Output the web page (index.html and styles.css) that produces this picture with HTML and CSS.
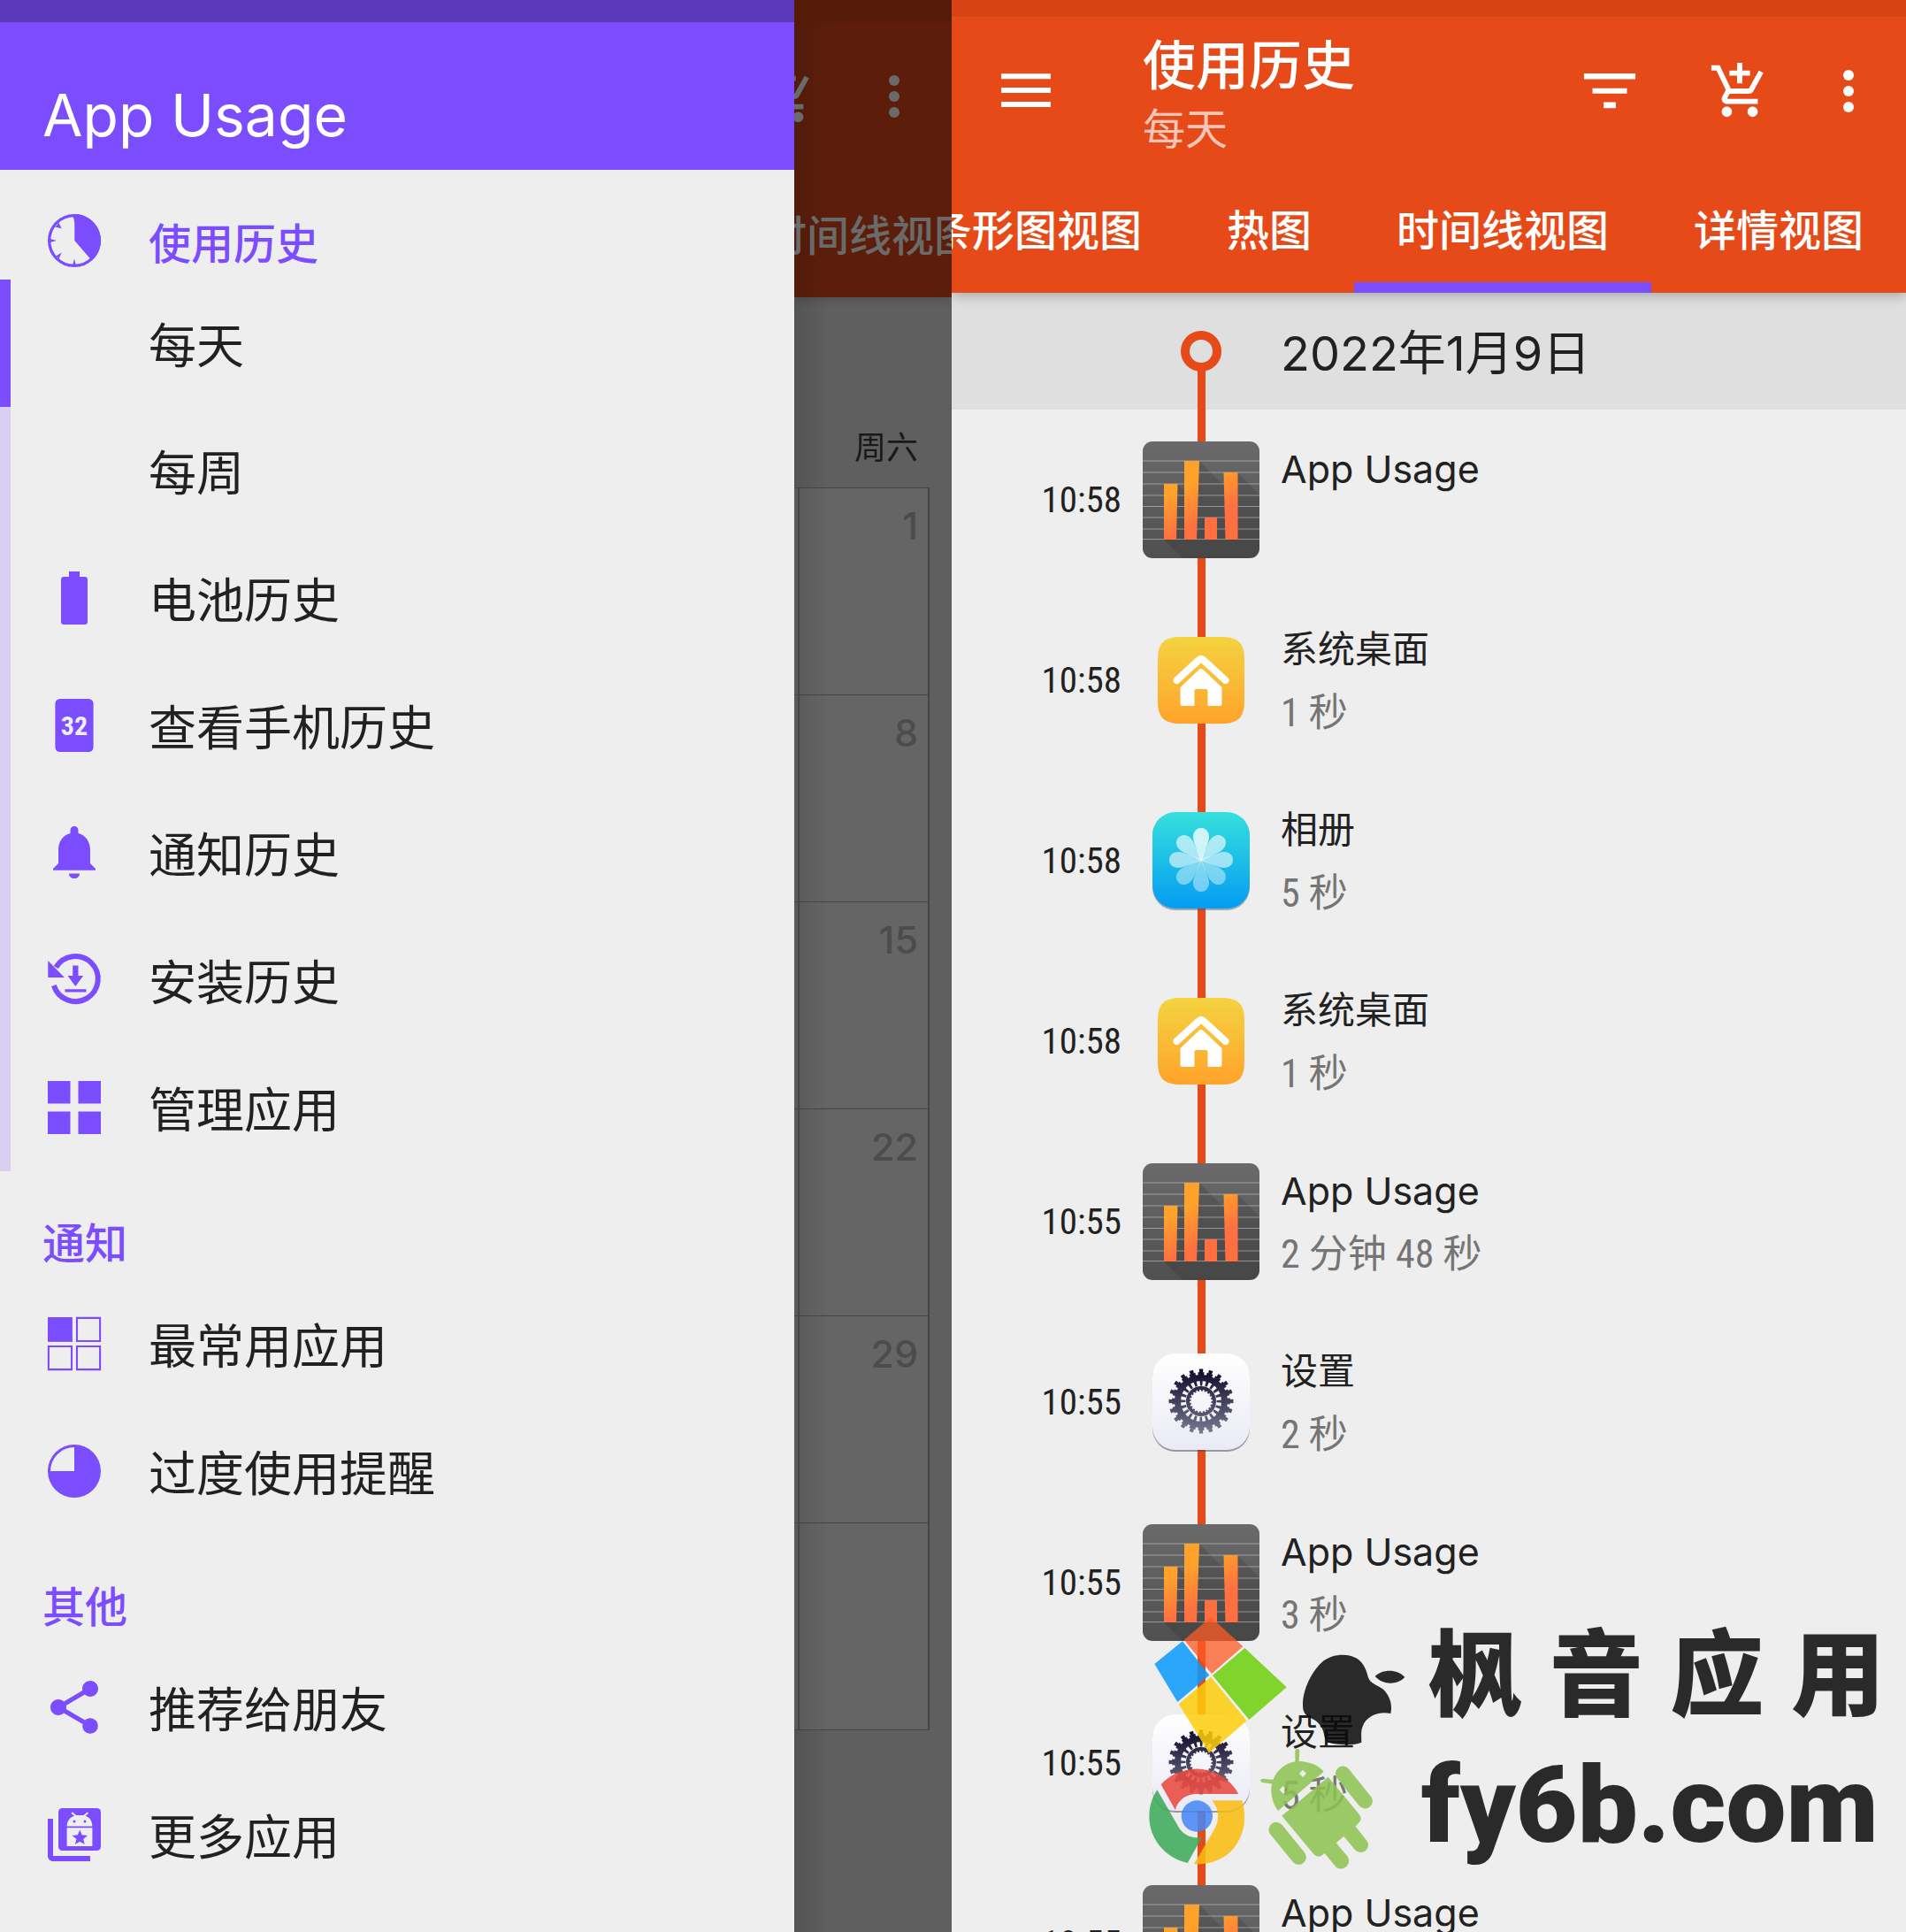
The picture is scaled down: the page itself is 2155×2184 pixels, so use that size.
FILE: index.html
```html
<!DOCTYPE html>
<html lang="zh-CN">
<head>
<meta charset="utf-8">
<meta name="viewport" content="width=device-width, initial-scale=1">
<title>App Usage</title>
<link rel="stylesheet" href="styles.css">
</head>
<body>
<svg class="defs" width="0" height="0" aria-hidden="true">
  <defs>
    <linearGradient id="g-tile" x1="0" y1="0" x2="0" y2="1"><stop offset="0" stop-color="#6a6a6a"/><stop offset="1" stop-color="#505050"/></linearGradient>
    <linearGradient id="g-bar" gradientUnits="userSpaceOnUse" x1="50" y1="50" x2="70" y2="90"><stop offset="0" stop-color="#ffa22b"/><stop offset="1" stop-color="#ff6f40"/></linearGradient>
    <linearGradient id="g-home" x1="0" y1="0" x2="0" y2="1"><stop offset="0" stop-color="#f4d340"/><stop offset="1" stop-color="#ffa32b"/></linearGradient>
    <linearGradient id="g-photo" x1="0" y1="0" x2="0" y2="1"><stop offset="0" stop-color="#36e0dc"/><stop offset="1" stop-color="#049cf2"/></linearGradient>
    <linearGradient id="g-set" x1="0" y1="0" x2="0" y2="1"><stop offset="0" stop-color="#ffffff"/><stop offset="1" stop-color="#eaeaf5"/></linearGradient>
    <linearGradient id="g-gear" gradientUnits="userSpaceOnUse" x1="0" y1="18" x2="0" y2="92"><stop offset="0" stop-color="#0c0828"/><stop offset="1" stop-color="#7b7990"/></linearGradient>
    <symbol id="i-cart" viewBox="0 0 24 24"><path d="M11 9h2V6h3V4h-3V1h-2v3H8v2h3v3zm-4 9c-1.1 0-1.99.9-1.99 2S5.9 22 7 22s2-.9 2-2-.9-2-2-2zm10 0c-1.1 0-1.99.9-1.99 2s.89 2 1.99 2 2-.9 2-2-.9-2-2-2zm-9.83-3.25l.03-.12.9-1.63h7.45c.75 0 1.41-.41 1.75-1.03l3.86-7.01L19.42 4h-.01l-1.1 2-2.76 5H8.53l-.13-.27L6.16 6l-.95-2-.94-2H1v2h2l3.6 7.59-1.35 2.45c-.16.28-.25.61-.25.96 0 1.1.9 2 2 2h12v-2H7.42c-.13 0-.25-.11-.25-.25z"/></symbol>
    <symbol id="i-more" viewBox="0 0 24 24"><circle cx="12" cy="6" r="2"/><circle cx="12" cy="12" r="2"/><circle cx="12" cy="18" r="2"/></symbol>
    <symbol id="i-usage" viewBox="0 0 132 132">
      <rect width="132" height="132" rx="11" fill="url(#g-tile)"/>
      <path d="M64 22 132 90V121Q132 132 121 132H45L24 111 39 48 48 57V22ZM107 35 132 60V90L107 65Z" fill="#000" opacity=".12"/>
      <path d="M0 22H132M0 35H132M0 48H132M0 61H132M0 73.500H132M0 86H132M0 99H132M0 110.500H132" stroke="#fff" stroke-opacity=".4" stroke-width="1.200"/>
      <path d="M24 48H39.500L38 111H24ZM47 22H64L61 111H47ZM70 86H84V111H70ZM91.500 35H107.500V111H93.500Z" fill="url(#g-bar)"/>
    </symbol>
    <symbol id="i-home" viewBox="0 0 98 98">
      <path d="M0 26C0 7 7 0 26 0H72C91 0 98 7 98 26V72C98 91 91 98 72 98H26C7 98 0 91 0 72Z" fill="url(#g-home)"/>
      <path d="M21.500 49 46 26.500Q49 23.500 52 26.500L76.500 49" fill="none" stroke="#fff" stroke-width="8" stroke-linecap="round"/>
      <path d="M25.500 57 46 37.500Q49 34.500 52 37.500L72.500 57V75.500Q72.500 78 70 78H56.500V61Q56.500 59 54.500 59H43.500Q41.500 59 41.500 61V78H28Q25.500 78 25.500 75.500Z" fill="#fff"/>
    </symbol>
    <symbol id="i-photo" viewBox="0 0 110 112">
      <rect y="3" width="110" height="109" rx="26" fill="#456" opacity=".45"/>
      <rect y="1" width="110" height="109" rx="26" fill="url(#g-photo)"/>
      <g transform="translate(55 55)" fill="#fff">
        <path id="petal" d="M0 2 -8 -20C-11 -29 -7 -36 0 -36S11 -29 8 -20Z" opacity=".78"/>
        <use href="#petal" transform="rotate(45)" opacity=".8"/><use href="#petal" transform="rotate(90)" opacity=".75"/>
        <use href="#petal" transform="rotate(135)" opacity=".55"/><use href="#petal" transform="rotate(180)" opacity=".55"/>
        <use href="#petal" transform="rotate(225)" opacity=".55"/><use href="#petal" transform="rotate(270)" opacity=".75"/>
        <use href="#petal" transform="rotate(315)" opacity=".8"/>
      </g>
    </symbol>
    <symbol id="i-settings" viewBox="0 0 110 112">
      <rect y="3" width="110" height="109" rx="26" fill="#445" opacity=".5"/>
      <rect y="1" width="110" height="109" rx="26" fill="url(#g-set)"/>
      <g fill="none" stroke="url(#g-gear)">
        <circle cx="55" cy="55" r="26.500" stroke-width="7"/>
        <circle cx="55" cy="55" r="31" stroke-width="4" pathLength="40" stroke-dasharray="1.400 .6" stroke-dashoffset=".7"/>
        <circle cx="55" cy="55" r="34.500" stroke-width="4" pathLength="40" stroke-dasharray=".8 1.200" stroke-dashoffset=".4"/>
        <circle cx="55" cy="55" r="21" stroke-width="7" pathLength="40" stroke-dasharray=".9 1.100" stroke-dashoffset=".4"/>
        <circle cx="55" cy="55" r="15" stroke-width="4"/>
        <circle cx="55" cy="55" r="12.500" stroke-width="2" pathLength="40" stroke-dasharray="1 1"/>
      </g>
    </symbol>
  </defs>
</svg>

<main class="board">
  <section class="phone phone-drawer">
    <nav class="drawer" aria-label="App Usage">
      <header class="drawer-head"><h1>App Usage</h1></header>
      <h2 class="group-title">
        <svg class="ico" viewBox="0 0 24 24" aria-hidden="true"><circle cx="12" cy="12" r="9.450" fill="none" stroke="currentColor" stroke-width="1.100"/><path d="M12.100 12V5.500Q12 4 11.400 2.600L12 2A10 10 0 0 1 18.600 19.500ZM2.900 11.300 5.300 12 2.900 12.700ZM11.400 21.200 12 18.800 12.600 21.200ZM4.700 6.800Q6.200 6.100 5.900 4.700L7.200 7.400ZM5 17.900Q6.200 18 6 19.300L7.200 16.500Z"/></svg>
        使用历史
      </h2>
      <ul class="menu rail">
        <li><a class="current" href="#daily">每天</a></li>
        <li><a href="#weekly">每周</a></li>
        <li><a href="#battery"><svg class="ico" viewBox="0 0 24 24" aria-hidden="true"><path d="M16 4H14V2h-4v2H8C7.400 4 7 4.400 7 5v16c0 .6.4 1 1 1h8c.6 0 1-.4 1-1V5c0-.6-.4-1-1-1z"/></svg>电池历史</a></li>
        <li><a href="#unlock"><svg class="ico" viewBox="0 0 24 24" aria-hidden="true"><rect x="4.800" y="2" width="14.400" height="20" rx="1.800"/><text class="ico-num" x="12" y="15.700" text-anchor="middle">32</text></svg>查看手机历史</a></li>
        <li><a href="#notices"><svg class="ico" viewBox="0 0 24 24" aria-hidden="true"><path d="M12 21.700c1.100 0 2-.8 2-1.900h-4c0 1.100.9 1.900 2 1.900zM18 16v-5c0-3.070-1.640-5.640-4.500-6.320V3.500c0-.83-.67-1.500-1.500-1.500s-1.500.67-1.500 1.500v1.180C7.630 5.360 6 7.920 6 11v5l-2 2v.6h16V18l-2-2z"/></svg>通知历史</a></li>
        <li><a href="#installs"><svg class="ico" viewBox="0 0 24 24" aria-hidden="true"><path d="M4.300 14A8.500 8.500 0 1 0 5.100 7.200" fill="none" stroke="currentColor" stroke-width="2"/><path d="M2.100 4.700 8.300 11H2.100ZM11.400 6.500H13.500V10.300H15.400L12.450 14.300 9.500 10.300H11.400ZM8.500 15.400H16.500V16.500H8.500Z"/></svg>安装历史</a></li>
        <li><a href="#manage"><svg class="ico" viewBox="0 0 24 24" aria-hidden="true"><path d="M2 2h8.500v8.500H2zM13.500 2H22v8.500h-8.500zM2 13.500h8.500V22H2zM13.500 13.500H22V22h-8.500z"/></svg>管理应用</a></li>
      </ul>
      <h2 class="group-title">通知</h2>
      <ul class="menu">
        <li><a href="#top-apps"><svg class="ico" viewBox="0 0 24 24" aria-hidden="true"><path d="M2 2h9.300v9.300H2z"/><path d="M13 2.300h8.700V11H13zM2.300 13H11v8.700H2.300zM13 13h8.700v8.700H13z" fill="none" stroke="currentColor" stroke-width=".7"/></svg>最常用应用</a></li>
        <li><a href="#overuse"><svg class="ico" viewBox="0 0 24 24" aria-hidden="true"><path fill-rule="evenodd" d="M12 2a10 10 0 1 0 0 20 10 10 0 0 0 0-20zM12 3V12H3A9 9 0 0 1 12 3z"/></svg>过度使用提醒</a></li>
      </ul>
      <h2 class="group-title">其他</h2>
      <ul class="menu">
        <li><a href="#share"><svg class="ico" viewBox="0 0 24 24" aria-hidden="true"><path d="M18 16.080c-.76 0-1.440.3-1.960.77L8.910 12.700c.05-.23.09-.46.09-.7s-.04-.47-.09-.7l7.050-4.110c.54.5 1.250.81 2.040.81 1.660 0 3-1.340 3-3s-1.340-3-3-3-3 1.340-3 3c0 .24.04.47.09.7L8.040 9.810C7.500 9.310 6.790 9 6 9c-1.660 0-3 1.340-3 3s1.340 3 3 3c.79 0 1.500-.31 2.040-.81l7.120 4.160c-.05.21-.08.43-.08.65 0 1.610 1.310 2.920 2.920 2.920 1.610 0 2.920-1.310 2.920-2.920s-1.310-2.920-2.920-2.920z"/></svg>推荐给朋友</a></li>
        <li><a href="#more"><svg class="ico" viewBox="0 0 24 24" aria-hidden="true"><path d="M4 6H2v14c0 1.100.9 2 2 2h14v-2H4V6z"/><rect x="6" y="2" width="16" height="16" rx="1.500"/><path d="M9.200 8.800C9.300 6.600 10.500 5.400 12 4.900L10.800 3.900 11.300 3.500 12.700 4.700H15.500L16.900 3.500 17.400 3.900 16.200 4.900C17.700 5.400 18.700 6.600 18.800 8.800ZM9.200 9.400H18.800V16.300H9.200Z" fill="#eee"/><circle cx="12" cy="7" r=".5"/><circle cx="16" cy="7" r=".5"/><path d="M14.100 10.200 14.900 12.100 17 12.300 15.400 13.700 15.900 15.700 14.100 14.600 12.300 15.700 12.800 13.700 11.200 12.300 13.300 12.100Z"/></svg>更多应用</a></li>
      </ul>
    </nav>
    <div class="behind">
      <header class="dim-bar">
        <div class="toolbar-end">
          <svg class="ico cart" aria-hidden="true"><use href="#i-cart"/></svg>
          <svg class="ico" aria-hidden="true"><use href="#i-more"/></svg>
        </div>
        <div class="dim-tabs"><span>时间线视图</span></div>
      </header>
      <table class="calendar">
        <thead><tr><th class="prev"></th><th>周六</th></tr></thead>
        <tbody>
          <tr><td class="prev"></td><td>1</td></tr>
          <tr><td class="prev"></td><td>8</td></tr>
          <tr><td class="prev"></td><td>15</td></tr>
          <tr><td class="prev"></td><td>22</td></tr>
          <tr><td class="prev"></td><td>29</td></tr>
          <tr><td class="prev"></td><td></td></tr>
        </tbody>
      </table>
    </div>
  </section>

  <section class="phone phone-history">
    <header class="app-bar">
      <div class="toolbar">
        <button class="icon-btn" aria-label="菜单"><svg class="ico" viewBox="0 0 24 24"><path d="M2.700 5.400h18.600v2H2.700zM2.700 10.700h18.600v2H2.700zM2.700 16h18.600v2H2.700z"/></svg></button>
        <div class="titles"><h2>使用历史</h2><p>每天</p></div>
        <div class="toolbar-end">
          <button class="icon-btn filter" aria-label="筛选"><svg class="ico" viewBox="0 0 24 24"><path d="M2.300 5.300h19.400v2.200H2.300zM5.500 10.900h13v2h-13zM9.700 16.200h4.600v2.200H9.700z"/></svg></button>
          <button class="icon-btn" aria-label="购买"><svg class="ico cart"><use href="#i-cart"/></svg></button>
          <button class="icon-btn" aria-label="更多"><svg class="ico"><use href="#i-more"/></svg></button>
        </div>
      </div>
      <div class="tabs" role="tablist">
        <button role="tab">条形图视图</button>
        <button role="tab">热图</button>
        <button role="tab" class="active" aria-selected="true">时间线视图</button>
        <button role="tab">详情视图</button>
      </div>
    </header>
    <div class="row day">
      <span class="time"></span>
      <span class="track start"><i class="ring"></i></span>
      <h3>2022年1月9日</h3>
    </div>
    <ol class="timeline">
      <li class="row"><time class="time">10:58</time><span class="track"><svg class="app-132"><use href="#i-usage"/></svg></span><div class="info"><h4 lang="en">App Usage</h4><p></p></div></li>
      <li class="row"><time class="time">10:58</time><span class="track"><svg class="app-98"><use href="#i-home"/></svg></span><div class="info"><h4>系统桌面</h4><p>1 秒</p></div></li>
      <li class="row"><time class="time">10:58</time><span class="track"><svg class="app-110"><use href="#i-photo"/></svg></span><div class="info"><h4>相册</h4><p>5 秒</p></div></li>
      <li class="row"><time class="time">10:58</time><span class="track"><svg class="app-98"><use href="#i-home"/></svg></span><div class="info"><h4>系统桌面</h4><p>1 秒</p></div></li>
      <li class="row"><time class="time">10:55</time><span class="track"><svg class="app-132"><use href="#i-usage"/></svg></span><div class="info"><h4 lang="en">App Usage</h4><p>2 分钟 48 秒</p></div></li>
      <li class="row"><time class="time">10:55</time><span class="track"><svg class="app-110"><use href="#i-settings"/></svg></span><div class="info"><h4>设置</h4><p>2 秒</p></div></li>
      <li class="row"><time class="time">10:55</time><span class="track"><svg class="app-132"><use href="#i-usage"/></svg></span><div class="info"><h4 lang="en">App Usage</h4><p>3 秒</p></div></li>
      <li class="row"><time class="time">10:55</time><span class="track"><svg class="app-110"><use href="#i-settings"/></svg></span><div class="info"><h4>设置</h4><p>5 秒</p></div></li>
      <li class="row"><time class="time">10:55</time><span class="track"><svg class="app-132"><use href="#i-usage"/></svg></span><div class="info"><h4 lang="en">App Usage</h4><p></p></div></li>
    </ol>
    <aside class="watermark">
      <svg class="logos" viewBox="0 0 960 1152" aria-hidden="true">
        <path d="M297 84 406 184 300 276 206 161Z" fill="#ff5b26" opacity=".88"/>
        <path d="M201 166 292 281 184 372 106 243Z" fill="#0c9bfd"/>
        <path d="M412 189 554 322 427 432 303 282Z" fill="#6fd00c"/>
        <path d="M297 287 419 436 291 545 188 379Z" fill="#fece0c"/>
        <path d="M609 380C609 330 640 265 680 232C715 206 765 208 790 223C815 238 824 262 830 286C836 310 862 314 880 328C903 348 914 380 907 411C865 403 825 420 812 455C805 472 808 490 808 509C780 520 745 518 715 514C690 510 684 500 681 482C676 452 655 435 637 427C612 415 609 400 609 380ZM854 285C880 260 930 260 955 288C930 315 880 315 854 285Z" fill="#0b0b0b"/>
        <path d="M128 652A162 162 0 0 1 391 684H250C205 684 180 715 177 739Z" fill="#e9473d"/>
        <path d="M115 670 187 795C204 824 233 836 267 831L218 918C140 900 88 835 88 760C88 725 98 695 115 670Z" fill="#3baa58"/>
        <path d="M301 706H403C420 765 412 820 375 868C345 905 295 925 240 922L311 800C330 765 322 730 301 706Z" fill="#fbbd0e"/>
        <circle cx="250" cy="759" r="53" fill="#4687f5"/>
        <g fill="#8fc451">
          <path fill-rule="evenodd" d="M525 741C488 690 495 620 550 586C560 580 572 576 583 574V536Q591 524 598 536L596 573C630 573 665 588 680 608ZM609 602 621 614 609 627 597 614ZM542 657 554 670 542 683 530 670Z"/>
          <path d="M471 632 516 636 510 650 471 645Q459 638 471 632Z"/>
          <path d="M695 626 802 755Q810 768 802 778L788 794 826 842Q838 862 822 876 806 888 788 875L748 828 722 850 760 895Q772 915 757 930 738 944 722 932L683 885 672 893Q658 900 646 888L538 758Z"/>
          <path d="M745 615 820 708M519 805 595 898" stroke="#8fc451" stroke-width="51" stroke-linecap="round"/>
        </g>
      </svg>
      <div class="brand">
        <p class="brand-name"><span>枫</span><span>音</span><span>应</span><span>用</span></p>
        <p class="brand-site">fy6b.com</p>
      </div>
    </aside>
  </section>
</main>
</body>
</html>
```
FILE: styles.css
```css
:root {
  --accent: #7c4dff;
  --primary: #e64a19;
  --surface: #eeeeee;
  --ink: #212121;
  --cjk: "Noto Sans CJK SC", sans-serif;
}

* { box-sizing: border-box; }

body, h1, h2, h3, h4, p, ul, ol { margin: 0; padding: 0; }

body {
  background: var(--surface);
  color: var(--ink);
  font-family: Inter, var(--cjk);
}

ul, ol { list-style: none; }
h1, h2, h3, h4, th { font-weight: 400; }
.defs { display: block; position: absolute; }

.board {
  display: grid;
  grid-template-columns: 1076fr 1079fr;
  height: 100vh;
  overflow: hidden;
}

.phone { min-width: 0; overflow: hidden; }

.ico {
  display: block;
  flex: none;
  width: 72px;
  height: 72px;
  fill: currentColor;
}
.cart { padding: 1px; }

/* Drawer */
.phone-drawer { display: grid; grid-template-columns: 898fr 178fr; }
.drawer { min-width: 0; }

.drawer-head {
  display: flex;
  align-items: flex-end;
  height: 192px;
  padding: 0 48px 20px;
  border-top: 25px solid #5b37b9;
  background: var(--accent);
  color: #fff;
}
.drawer-head h1 { font-size: 66px; line-height: 84px; }

.group-title {
  display: flex;
  align-items: center;
  gap: 48px;
  height: 124px;
  padding: 36px 48px 0;
  color: var(--accent);
  font-size: 48px;
  font-weight: 500;
}
.menu + .group-title { height: 123px; padding-top: 32px; }

.menu a {
  display: flex;
  align-items: center;
  gap: 48px;
  height: 144px;
  padding: 0 48px;
  color: var(--ink);
  font-size: 54px;
  line-height: 80px;
  text-decoration: none;
}
.rail a, .menu a { font-family: var(--cjk); }
.menu .ico { color: var(--accent); }
.rail a { border-left: 12px solid #d9cff0; padding-left: 36px; }
.rail a.current { border-color: var(--accent); }
.rail a:not(:has(svg)) { padding-left: 156px; }
.ico-num { fill: #eee; font: 700 10px "Roboto Condensed", "Liberation Sans Narrow", Roboto, sans-serif; }

/* Dimmed screen beside the drawer */
.behind {
  min-width: 0;
  overflow: hidden;
  background: linear-gradient(90deg, rgba(0, 0, 0, .12), transparent 40px), #5f5f5f;
}
.toolbar-end { display: flex; align-items: center; justify-content: flex-end; gap: 51px; height: 168px; padding-right: 29px; }
.dim-bar {
  border-top: 25px solid #561a09;
  background: linear-gradient(90deg, rgba(0, 0, 0, .12), transparent 40px), #5c1e0b;
  box-shadow: 0 2px 10px rgba(0, 0, 0, .2);
  color: #6a6a6a;
}
.dim-tabs {
  display: flex;
  align-items: center;
  justify-content: flex-end;
  height: 143px;
  padding-bottom: 4px;
  font-size: 48px;
  font-weight: 500;
  white-space: nowrap;
}
.dim-tabs span { margin-right: -28px; }

.calendar {
  width: 153px;
  margin-top: 120px;
  border-collapse: collapse;
  table-layout: fixed;
}
.calendar th { height: 95px; padding: 0 12px 0 0; text-align: right; color: #191919; font-size: 36px; white-space: nowrap; }
.calendar td {
  height: 234px;
  padding: 16px 11px 0 0;
  border: 1px solid #444;
  border-width: 1px 2px;
  background: rgba(255, 255, 255, .04);
  color: #4c4c4c;
  font-size: 43px;
  font-weight: 500;
  text-align: right;
  vertical-align: top;
}
.calendar .prev { width: 5px; padding: 0; border-left: 0; }

/* History screen */
.phone-history { position: relative; display: flex; flex-direction: column; }
.app-bar {
  position: relative;
  border-top: 19px solid #d84315;
  background: var(--primary);
  box-shadow: 0 2px 14px rgba(0, 0, 0, .3);
  color: #fff;
}
.toolbar { display: flex; align-items: center; height: 168px; padding-left: 48px; }
.toolbar .toolbar-end { flex: 1; }
.icon-btn { padding: 0; border: 0; background: none; color: inherit; }
.filter { margin-right: 24px; }
.titles { margin-left: 96px; padding-top: 6px; }
.titles h2 { font-size: 60px; font-weight: 500; line-height: 80px; }
.titles p { color: rgba(255, 255, 255, .7); font-size: 48px; line-height: 64px; }

.tabs { display: flex; justify-content: flex-end; }
.tabs button {
  flex: none;
  height: 144px;
  padding: 0 48px 4px;
  border: 0;
  background: none;
  color: inherit;
  font: 500 48px var(--cjk);
}
.tabs .active { box-shadow: inset 0 -12px var(--accent); }

.row { display: grid; grid-template-columns: 192px 132px 1fr; align-items: center; gap: 24px; height: 204px; flex: none; }
.time { text-align: right; font: 41px "Roboto Condensed", "Liberation Sans Narrow", Roboto, sans-serif; }
.track {
  display: flex;
  align-items: center;
  justify-content: center;
  height: 100%;
  background: linear-gradient(var(--primary), var(--primary)) center / 9px 100% no-repeat;
}
.day { height: 132px; background: #dfdfdf; }
.day h3 { padding-top: 6px; font-size: 54px; line-height: 80px; }
.start { background-size: 9px 50px; background-position: center bottom; }
.ring { width: 46px; height: 46px; border: 10px solid var(--primary); border-radius: 50%; background: #dfdfdf; }
.app-132 { width: 132px; height: 132px; }
.app-98 { width: 98px; height: 98px; }
.app-110 { width: 110px; height: 112px; }
.info { padding-top: 2px; }
.info h4 { font-size: 42px; line-height: 72px; }
.info h4:lang(en) { font-size: 43px; }
.info p { min-height: 72px; color: #757575; font: 44px/72px "Roboto Condensed", "Liberation Sans Narrow", "Noto Sans CJK SC", sans-serif; }

/* Watermark over the lower right corner */
.watermark {
  position: absolute;
  right: 0;
  bottom: 0;
  display: flex;
  gap: 17px;
  width: 885px;
  height: 384px;
  color: #0b0b0b;
  opacity: .86;
}
.logos { flex: none; width: 320px; height: 384px; }
.brand { flex: 1; padding: 15px 24px 0 0; }
.brand-name { display: flex; justify-content: space-between; padding-left: 8px; font: 900 106px/140px var(--cjk); }
.brand-site { font: 900 121px/172px Roboto, sans-serif; }
```
